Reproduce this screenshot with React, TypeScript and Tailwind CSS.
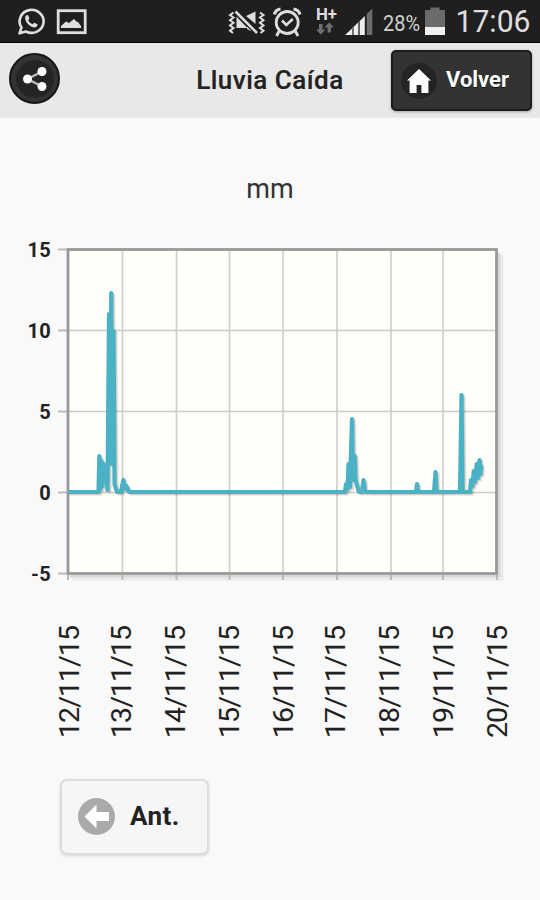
const days = [
  { x: 68, textX: 78.5, label: "12/11/15" },
  { x: 122.5, textX: 130.5, label: "13/11/15" },
  { x: 176.5, textX: 184.5, label: "14/11/15" },
  { x: 229.5, textX: 238.5, label: "15/11/15" },
  { x: 283, textX: 292.5, label: "16/11/15" },
  { x: 337, textX: 344.5, label: "17/11/15" },
  { x: 391, textX: 398.5, label: "18/11/15" },
  { x: 443, textX: 452.5, label: "19/11/15" },
  { x: 497, textX: 506.5, label: "20/11/15" },
];

const levels = [
  { y: 249.5, label: "15" },
  { y: 330.5, label: "10" },
  { y: 411.5, label: "5" },
  { y: 492.5, label: "0" },
  { y: 573.5, label: "-5" },
];

const rain =
  "M68 492H98.5L99.3 456L100.5 489L101.5 461L102.5 486L103.5 464L105 478L106 466L107.500 490L109 314L110 464L111.200 293L112.300 464L113.500 331L114.500 484L117 492H121L122.500 484L123.5 480L124.5 489L126.5 486L129 492H345L346 484L347.5 489L348.5 464L350 487L352 419L353 480L354.800 456L355.500 480L358 489L359 492H362L363.5 480L365 492H416L417 484L418 492H434L435.5 472L436.5 492H460L461.500 395L462.5 492H470L471 480L472.500 486L473.700 471L475 482L476.700 464L478 478L479.5 460L480.5 474L481 466";

const StatusBar = () => (
  <div className="flex h-[43px] items-center border-b border-black bg-[#1f1f1f]">
    <svg width="540" height="43" viewBox="0 0 540 43" aria-hidden="true">
      {/* whatsapp */}
      <path
        d="M21.500 27.500A12 11.500 0 1 1 26 31.500L19.500 33.300Z"
        fill="none"
        stroke="#dedede"
        strokeWidth="2.600"
        strokeLinejoin="round"
      />
      <path
        d="M26 15.500c1-1 2-.7 2.400.3l.9 2.300c.3.8-.8 1.600-1.100 2.100.9 2 2.400 3.300 4.500 4 .6-.5 1.300-1.700 2-1.300l2.400 1.200c1 .5.2 2.300-.8 2.900-2 1.200-5.400-.2-7.600-2.200-2.400-2.200-4.900-6.800-2.700-9.300Z"
        fill="#dedede"
      />
      {/* picture */}
      <rect x="58.200" y="10.700" width="27" height="22" fill="none" stroke="#dedede" strokeWidth="2.800" />
      <path d="M61 28V26l5-4.500 3 1.500 5-4 3 3h1l3 4v2Z" fill="#dedede" />
      {/* muted with vibration */}
      <path
        d="M233.500 12.500l-3.500 2.500 3.500 2.500-3.500 2.700 3.500 2.600-3.500 2.700 3.500 2.500-3.500 2.700 3 2.300M260 12.500l3.500 2.500-3.500 2.500 3.500 2.700-3.500 2.600 3.500 2.700-3.500 2.500 3.500 2.700-3 2.300"
        fill="none"
        stroke="#dedede"
        strokeWidth="2"
      />
      <path d="M236.500 16.500L247.500 28H236.500ZM246 16L255.500 11.500V24ZM247 26L252 31.500 247 29Z" fill="#dedede" />
      <path d="M235.500 11.500l21.500 21.500" stroke="#1f1f1f" strokeWidth="5" />
      <path d="M235.500 11.500l21.500 21.500" stroke="#dedede" strokeWidth="2.600" />
      {/* alarm */}
      <g fill="none" stroke="#dedede" strokeWidth="2.800">
        <circle cx="287.200" cy="22.500" r="11" />
        <path d="M282 20.500l4.300 4.500 6.500-6" strokeWidth="2.600" />
        <path d="M279.500 30.500l-3 5.500M295 30.500l3 5.500" />
        <path d="M274.500 14.500q1-5 6-5.500M293.500 9q5 .5 6.500 5.500" strokeWidth="3.200" />
      </g>
      <text x="316" y="19.800" fontSize="16" fontWeight="700" fill="#dedede" textLength="21" lengthAdjust="spacingAndGlyphs">
        H+
      </text>
      <path d="M319 24h3.500v5.500h3l-4.700 5-4.700-5h2.900ZM327.500 32.500v-5h-3l4.700-5 4.700 5h-3v5Z" fill="#707070" />
      {/* signal */}
      <path d="M345 35l7-6.500V35Z" fill="#eee" />
      <path d="M353.500 27l4.500-4.500V35h-4.500Z" fill="#eee" />
      <path d="M359.800 21l5-5v19h-5Z" fill="#eee" />
      <path d="M366.800 14l5.500-5.500V35h-5.500Z" fill="#6d6d6d" />
      <path d="M352.800 27v8M358.900 21.500V35" stroke="#777" strokeWidth="1.400" />
      <text x="383" y="30.500" fontSize="21.500" fill="#d0d0d0" textLength="37" lengthAdjust="spacingAndGlyphs">
        28%
      </text>
      {/* battery */}
      <path d="M425 10h5.500V7.500h9V10h5.500V27h-20Z" fill="#6b6b6b" />
      <path d="M425 27h20v8h-20Z" fill="#f0f0f0" />
      <text x="455.500" y="32" fontSize="31.500" fill="#dedede" textLength="75" lengthAdjust="spacingAndGlyphs">
        17:06
      </text>
    </svg>
  </div>
);

const Header = () => (
  <header className="grid h-[75px] grid-cols-[141px_1fr_141px] items-start bg-[#e8e8e8] px-[8px] pt-[7px]">
    <button
      aria-label="Compartir"
      className="mt-[3px] ml-px flex h-[51px] w-[51px] items-center justify-center rounded-full border-2 border-[#161616] bg-[#333]"
    >
      <span className="flex h-[38px] w-[38px] items-center justify-center rounded-full bg-[#242424]">
        <svg width="28" height="28" viewBox="0 0 28 28">
          <path d="M21 6.500L6.500 14 21 21.500" fill="none" stroke="#bbb" strokeWidth="2.400" />
          <g fill="#fff">
            <circle cx="21" cy="6.500" r="4.500" />
            <circle cx="6.500" cy="14" r="4.500" />
            <circle cx="21" cy="21.500" r="4.500" />
          </g>
        </svg>
      </span>
    </button>
    <h1 className="pt-[12px] text-center text-[26px] leading-[36px] font-medium tracking-[0.5px] text-[#222] [-webkit-text-stroke:0.2px_#222]">
      Lluvia Caída
    </h1>
    <button className="flex h-[61px] w-[141px] items-center rounded-[5px] border-2 border-[#1c1c1c] bg-[#333] pl-[8px] text-[22px] font-bold text-white shadow-[0_1px_3px_rgba(0,0,0,0.3)]">
      <span className="mr-[9px] flex h-[36px] w-[36px] shrink-0 items-center justify-center rounded-full bg-[#242424]">
        <svg width="24" height="24" viewBox="0 0 24 24">
          <path d="M12 0L0 11.500h2.600V24h7v-8h4.800v8h7V11.500H24Z" fill="#fff" />
        </svg>
      </span>
      <span className="pb-[3px] [text-shadow:0_1px_0_#111]">Volver</span>
    </button>
  </header>
);

const RainChart = () => (
  <svg className="block" width="540" height="566" viewBox="0 192 540 566">
    <defs>
      <clipPath id="plot">
        <rect x="68" y="249" width="429" height="325" />
      </clipPath>
    </defs>
    {/* soft edge on the right and bottom of the frame */}
    <path d="M499 253V576H70" fill="none" stroke="#bbb" strokeWidth="3" opacity="0.55" />
    <path d="M502 255V579H72" fill="none" stroke="#ddd" strokeWidth="3" opacity="0.5" />
    <rect x="68" y="249.500" width="428" height="324" fill="#fffef8" />
    <g stroke="#ccc" strokeWidth="1.600">
      {days.map((d) => (
        <line key={d.label} x1={d.x} x2={d.x} y1="250" y2="573" />
      ))}
      {levels.map((l) => (
        <line key={l.label} x1="68" x2="496" y1={l.y} y2={l.y} />
      ))}
    </g>
    <g stroke="#bbb" strokeWidth="2">
      {days.map((d) => (
        <line key={d.label} x1={d.x} x2={d.x} y1="574" y2="580" />
      ))}
      {levels.map((l) => (
        <line key={l.label} x1="58" x2="67" y1={l.y} y2={l.y} />
      ))}
    </g>
    <rect x="68" y="249.500" width="428.500" height="324" fill="none" stroke="#999" strokeWidth="2.800" />
    <g clipPath="url(#plot)" fill="none" strokeLinejoin="round" strokeLinecap="round">
      <path d={rain} stroke="#000" strokeWidth="3.400" opacity="0.1" transform="translate(2.500 2)" />
      <path d={rain} stroke="#000" strokeWidth="3.400" opacity="0.12" transform="translate(1.300 1)" />
      <path d={rain} stroke="#4bb2c5" strokeWidth="4.200" />
    </g>
    <g fontSize="20" fontWeight="700" fill="#222" textAnchor="end" letterSpacing="0.3">
      {levels.map((l) => (
        <text key={l.label} x="51" y={l.y + 7}>
          {l.label}
        </text>
      ))}
    </g>
    <g fontSize="28.500" fill="#222">
      {days.map((d) => (
        <text key={d.label} transform={`translate(${d.textX} 738) rotate(-90)`} textLength="113">
          {d.label}
        </text>
      ))}
    </g>
  </svg>
);

export default function App() {
  return (
    <div className="h-[900px] w-[540px] overflow-hidden bg-[#f9f9f9] font-[Roboto,'Liberation_Sans',sans-serif]">
      <StatusBar />
      <Header />
      <main>
        <p className="h-[74px] pt-[53px] text-center text-[27px] leading-[36px] text-[#333]">mm</p>
        <RainChart />
        <button className="mt-[21px] ml-[60px] flex h-[76px] w-[149px] items-center rounded-[7px] border-2 border-[#ddd] bg-[#f6f6f6] pl-[16px] text-[26px] font-bold tracking-[0.4px] text-[#222] shadow-[0_1px_3px_rgba(0,0,0,0.15)]">
          <svg className="mr-[15px] mb-[2px] shrink-0" width="37" height="37" viewBox="0 0 37 37">
            <circle cx="18.500" cy="18.500" r="18.500" fill="#aaa" />
            <path d="M6.500 18.500L18.500 6.500V14H31v9H18.500v7.500Z" fill="#fff" />
          </svg>
          <span className="pb-[2px]">Ant.</span>
        </button>
      </main>
    </div>
  );
}
